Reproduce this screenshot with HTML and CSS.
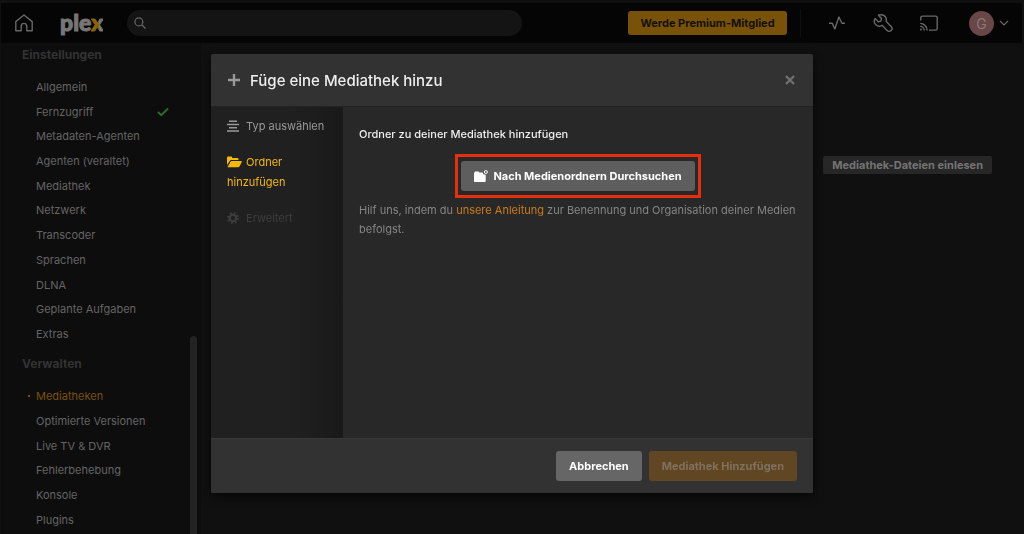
FILE: index.html
```
<!DOCTYPE html>
<html lang="de">
<head>
    <meta charset="utf-8">
    <title>Plex</title>
    <meta name="viewport" content="width=device-width,initial-scale=1.0">
    <link rel="stylesheet" href="styles.css">
</head>
<body>
    <header class="navbar">
        <a class="nav-home" href="#" aria-label="Home">
            <svg width="20" height="20" viewBox="0 0 20 20" fill="none" stroke="currentColor" stroke-width="1.4" stroke-linejoin="round"><path d="M1.8 8.6 10 2l8.2 6.6v9.2h-5.4v-4.6a2.8 2.8 0 0 0-5.6 0v4.6H1.8z"/></svg>
        </a>
        <a class="logo" href="#">ple<span>x</span></a>
        <label class="search">
            <svg width="12" height="12" viewBox="0 0 14 14" fill="none" stroke="currentColor" stroke-width="1.4"><circle cx="5.7" cy="5.7" r="4.6"/><path d="m9 9 4.4 4.4"/></svg>
            <input type="search" aria-label="Suche">
        </label>
        <button class="premium" type="button">Werde Premium-Mitglied</button>
        <nav class="nav-icons">
            <a href="#" aria-label="Aktivität">
                <svg width="20" height="20" viewBox="0 0 20 20" fill="none" stroke="currentColor" stroke-width="1.4" stroke-linejoin="round"><path d="M2 10.3h3.2l2.6 5.6L11.9 4l3 6.3H18"/></svg>
            </a>
            <a href="#" aria-label="Einstellungen">
                <svg width="20" height="20" viewBox="0 0 20 20" fill="none" stroke="currentColor" stroke-width="1.4" stroke-linejoin="round"><path d="M8.2 1.8a5 5 0 0 1 4.9 6.5l5 5.2a2.8 2.8 0 0 1-4 4l-5-5.2A5 5 0 0 1 2 5.6l3.2 3.1 2.7-.6.6-2.7L5.4 2.2a5 5 0 0 1 2.8-.4z"/></svg>
            </a>
            <a href="#" aria-label="Cast">
                <svg width="20" height="20" viewBox="0 0 20 20" fill="none" stroke="currentColor" stroke-width="1.4"><path d="M1.8 7.5V4.8a1.7 1.7 0 0 1 1.7-1.7h13a1.7 1.7 0 0 1 1.7 1.7v10.6a1.7 1.7 0 0 1-1.7 1.7H10M1.2 10.4a7 7 0 0 1 7 7M1.2 13.4a4 4 0 0 1 4 4"/><circle cx="2" cy="16.6" r="1" fill="currentColor" stroke="none"/></svg>
            </a>
        </nav>
        <button class="account" type="button" aria-label="Konto">
            <span class="avatar">G</span>
            <svg width="10" height="6" viewBox="0 0 10 6" fill="none" stroke="currentColor" stroke-width="1.2"><path d="m1 1 4 4 4-4"/></svg>
        </button>
    </header>

    <div class="page">
        <aside class="sidebar">
            <h2>Einstellungen</h2>
            <ul class="settings">
                <li><a href="#">Allgemein</a></li>
                <li>
                    <a href="#">Fernzugriff</a>
                    <svg class="check" width="12" height="10" viewBox="0 0 12 10" fill="none" stroke="currentColor" stroke-width="2"><path d="m1 5 3.3 3.2L11 1.5"/></svg>
                </li>
                <li><a href="#">Metadaten-Agenten</a></li>
                <li><a href="#">Agenten (veraltet)</a></li>
                <li><a href="#">Mediathek</a></li>
                <li><a href="#">Netzwerk</a></li>
                <li><a href="#">Transcoder</a></li>
                <li><a href="#">Sprachen</a></li>
                <li><a href="#">DLNA</a></li>
                <li><a href="#">Geplante Aufgaben</a></li>
                <li><a href="#">Extras</a></li>
            </ul>
            <h2>Verwalten</h2>
            <ul class="manage">
                <li class="active"><a href="#">Mediatheken</a></li>
                <li><a href="#">Optimierte Versionen</a></li>
                <li><a href="#">Live TV &amp; DVR</a></li>
                <li><a href="#">Fehlerbehebung</a></li>
                <li><a href="#">Konsole</a></li>
                <li><a href="#">Plugins</a></li>
            </ul>
            <div class="scrollbar"></div>
        </aside>
        <main class="content">
            <button class="scan" type="button">Mediathek-Dateien einlesen</button>
        </main>
    </div>

    <div class="modal" role="dialog" aria-labelledby="modal-title">
        <div class="modal-header">
            <svg width="14" height="14" viewBox="0 0 14 14" fill="none" stroke="currentColor" stroke-width="2.4"><path d="M7 1v12M1 7h12"/></svg>
            <h1 id="modal-title">Füge eine Mediathek hinzu</h1>
            <button class="close" type="button" aria-label="Schließen">
                <svg width="10" height="10" viewBox="0 0 10 10" fill="none" stroke="currentColor" stroke-width="2.4"><path d="m1 1 8 8M9 1 1 9"/></svg>
            </button>
        </div>
        <div class="modal-body">
            <nav class="steps">
                <a href="#">
                    <svg width="12" height="12" viewBox="0 0 12 12" fill="none" stroke="currentColor" stroke-width="1.5"><path d="M2 1.3h8M0 4.5h12M2 7.7h8M0 10.9h12"/></svg>
                    Typ auswählen
                </a>
                <a class="active" href="#">
                    <svg width="15" height="12" viewBox="0 0 15 12" fill="currentColor"><path d="M0 9V1.6Q0 .5 1.1.5h3q1 0 1 1V2h5.2q1.2 0 1.2 1.2v.9H4.2q-1 0-1.5.8zM.7 10.7l2.8-5q.3-.6 1-.6h9.7q1 0 .5.9l-2.2 4.4q-.4.8-1.3.8H1q-.6 0-.3-.5z"/></svg>
                    Ordner hinzufügen
                </a>
                <a class="disabled" href="#">
                    <svg width="12" height="12" viewBox="0 0 12 12" fill="none" stroke="currentColor"><circle cx="6" cy="6" r="3.2" stroke-width="2"/><circle cx="6" cy="6" r="5" stroke-width="1.8" stroke-dasharray="1.9 2.03"/></svg>
                    Erweitert
                </a>
            </nav>
            <section class="folder">
                <h3>Ordner zu deiner Mediathek hinzufügen</h3>
                <div class="highlight">
                    <button class="btn" type="button">
                        <svg width="14" height="12" viewBox="0 0 14 12" fill="currentColor"><path d="M0 3.2 1 1.4h3.6l.7 1h3.2a3 3 0 0 0 3.2 2.4v6.2q0 .9-.9.9H.9Q0 11.9 0 11z"/><circle cx="11.9" cy="2" r="1.5" fill="none" stroke="currentColor"/></svg>
                        Nach Medienordnern Durchsuchen
                    </button>
                </div>
                <p>Hilf uns, indem du <a href="#">unsere Anleitung</a> zur Benennung und Organisation deiner Medien befolgst.</p>
            </section>
        </div>
        <div class="modal-footer">
            <button class="btn" type="button">Abbrechen</button>
            <button class="btn btn-primary" type="button" disabled>Mediathek Hinzufügen</button>
        </div>
    </div>
</body>
</html>
```
FILE: styles.css
```
* {
    box-sizing: border-box;
}

body {
    margin: 0;
    height: 100vh;
    padding: 3px 2px 0 1px;
    display: flex;
    flex-direction: column;
    overflow: hidden;
    background: #101010;
    color: #646464;
    font-family: Inter, "Liberation Sans", sans-serif;
    font-size: 11px;
}

a {
    color: inherit;
    text-decoration: none;
}

button,
input {
    margin: 0;
    padding: 0;
    border: 0;
    background: none;
    color: inherit;
    font: inherit;
}

svg {
    flex: none;
}

ul {
    list-style: none;
    margin: 0;
    padding: 0;
}

/* navbar */
.navbar {
    flex: none;
    height: 40px;
    padding: 0 13px;
    display: flex;
    align-items: center;
    background: #050505;
    color: #686868;
}

.nav-home,
.nav-icons a {
    display: flex;
}

.logo {
    margin: 0 24px 3px 26px;
    color: #767676;
    font-family: Lato, sans-serif;
    font-size: 23px;
    font-weight: 900;
    line-height: 32px;
    -webkit-text-stroke: 1px #767676;
}

.logo span {
    background: linear-gradient(90deg, #8a6508 65%, #767676 65%);
    -webkit-background-clip: text;
    background-clip: text;
    color: transparent;
    -webkit-text-stroke: 1px transparent;
}

.search {
    width: 395px;
    height: 26px;
    padding: 0 7px;
    display: flex;
    align-items: center;
    gap: 8px;
    border-radius: 13px;
    background: #141414;
}

.search input {
    flex: 1;
    min-width: 0;
    outline: 0;
}

.premium {
    margin-left: auto;
    width: 159px;
    height: 24px;
    border-radius: 3px;
    background: #785208;
    color: #141005;
    font-weight: 700;
}

.nav-icons {
    height: 28px;
    margin-left: 13px;
    padding: 0 30px 0 26px;
    display: flex;
    align-items: center;
    gap: 26px;
    border-left: 1px solid #101010;
}

.account {
    display: flex;
    align-items: center;
    gap: 5px;
}

.avatar {
    width: 25px;
    height: 25px;
    border-radius: 50%;
    background: #694647;
    color: #8a7778;
    font-size: 14px;
    line-height: 25px;
}

/* page behind the dialog */
.page {
    flex: 1;
    min-height: 0;
    display: flex;
}

.sidebar {
    position: relative;
    width: 200px;
    padding: 4px 32px 0 21px;
    background: #0d0d0d;
}

.sidebar h2 {
    margin: 0 0 12px;
    color: #333;
    font-size: 12px;
    font-weight: 700;
    line-height: 16px;
}

.sidebar ul {
    padding-left: 14px;
    display: flex;
    flex-direction: column;
    justify-content: space-between;
}

.sidebar .settings {
    height: 271px;
    margin-bottom: 10px;
}

.sidebar .manage {
    height: 148px;
}

.sidebar li {
    display: flex;
    align-items: center;
    justify-content: space-between;
    line-height: 24px;
}

.sidebar .active {
    position: relative;
    color: #79500b;
}

.sidebar .active::before {
    content: "";
    position: absolute;
    left: -8px;
    width: 2px;
    height: 2px;
    background: currentColor;
}

.check {
    color: #2e6b2b;
}

.scrollbar {
    position: absolute;
    top: 293px;
    right: 4px;
    bottom: 0;
    width: 7px;
    border-radius: 4px 4px 0 0;
    background: #232323;
}

.content {
    flex: 1;
    padding: 113px 30px 0;
    text-align: right;
}

.scan {
    padding: 0 9px;
    border-radius: 2px;
    background: #272727;
    color: #747474;
    font-weight: 700;
    line-height: 18px;
}

/* dialog */
.modal {
    position: fixed;
    top: 54px;
    left: 0;
    right: 0;
    width: 602px;
    max-width: 100%;
    margin: 0 auto;
    border-radius: 2px;
    background: #282828;
    box-shadow: 0 4px 10px rgba(0, 0, 0, 0.6);
    overflow: hidden;
}

.modal-header {
    height: 53px;
    padding: 0 18px 0 16px;
    display: flex;
    align-items: center;
    gap: 9px;
    background: #323232;
    border-bottom: 1px solid #232323;
    color: #999;
}

.modal-header h1 {
    margin: 0;
    color: #eee;
    font-size: 15px;
    font-weight: 500;
}

.close {
    display: flex;
    margin-left: auto;
    color: #707070;
}

.modal-body {
    min-height: 331px;
    display: flex;
}

.steps {
    flex: none;
    width: 132px;
    padding: 9px 16px;
    display: flex;
    flex-direction: column;
    gap: 16px;
    background: linear-gradient(90deg, #202020 60%, #191919);
    color: #999;
    line-height: 20px;
}

.steps a {
    white-space: nowrap;
}

.steps svg {
    margin-right: 4px;
    vertical-align: -2px;
}

.steps .active {
    white-space: normal;
    color: #f5b90a;
}

.steps .active svg {
    margin-right: 1px;
}

.steps .disabled {
    color: #3e3e3e;
}

.folder {
    flex: 1;
    padding: 17px 16px 0;
}

.folder h3 {
    margin: 0;
    color: #eee;
    font-size: 11px;
    font-weight: 500;
    line-height: 20px;
}

.highlight {
    width: fit-content;
    margin: 10px auto 3px;
    padding: 4px 3px;
    border: 3px solid #e52f0d;
}

.folder p {
    margin: 0;
    color: #858585;
    line-height: 19px;
}

.folder p a {
    color: #cc7b19;
}

.btn {
    height: 30px;
    padding: 0 13px;
    display: flex;
    align-items: center;
    gap: 5px;
    border-radius: 3px;
    background: #5e5e5e;
    color: #fff;
    font-weight: 700;
}

.modal-footer {
    padding: 12px 16px;
    display: flex;
    justify-content: flex-end;
    gap: 7px;
    background: #323232;
    border-top: 1px solid #383838;
}

.modal-footer .btn {
    background: #666;
}

.modal-footer .btn-primary {
    background: #614623;
    color: #7f715e;
}
```
